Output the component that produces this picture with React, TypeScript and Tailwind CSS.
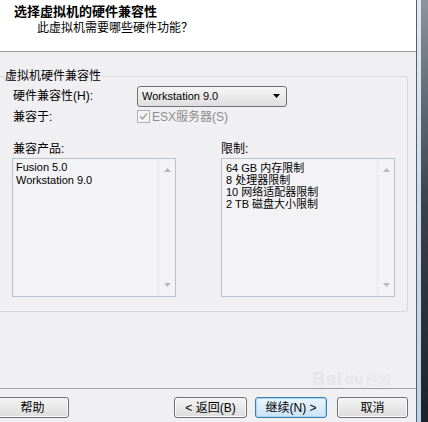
import React from "react";

const font = { fontFamily: '"Liberation Sans", "Noto Sans CJK SC", sans-serif' };

function ScrollBox({ children, width }: { children: React.ReactNode; width: string }) {
  return (
    <div className={`${width} h-[139px] border border-[#b9c1c9] bg-[#f3f2f5] flex`}>
      <div className="flex-1 pl-[3px] pt-[2px]">{children}</div>
      <div className="w-[17px] border-l border-[#e6e6e8] flex flex-col justify-between items-center py-[9px]">
        <svg width="7" height="4" viewBox="0 0 7 4">
          <path d="M0 4 L3.5 0 L7 4 Z" fill="#b8b8bc" />
        </svg>
        <svg width="7" height="4" viewBox="0 0 7 4">
          <path d="M0 0 L3.5 4 L7 0 Z" fill="#b8b8bc" />
        </svg>
      </div>
    </div>
  );
}

function Btn({ label, focus, className = "" }: { label: React.ReactNode; focus?: boolean; className?: string }) {
  return (
    <div
      className={`h-[21px] rounded-[3px] border flex items-center justify-center text-[12px] text-black ${
        focus
          ? "border-[#3c7fb1] bg-gradient-to-b from-[#eaf6fd] to-[#c9e3f6] shadow-[inset_0_0_0_1px_#a8d8f5]"
          : "border-[#707070] bg-gradient-to-b from-[#f4f4f4] to-[#dcdcdc] shadow-[inset_0_0_0_1px_#fbfbfb]"
      } ${className}`}
    >
      {label}
    </div>
  );
}

const limits = ["64 GB 内存限制", "8 处理器限制", "10 网络适配器限制", "2 TB 磁盘大小限制"];

export default function App() {
  return (
    <div className="w-[428px] h-[422px] flex overflow-hidden" style={font}>
      <div className="w-[416px] h-full flex flex-col bg-[#f0eff2] relative">
        <div className="h-[52px] bg-white border-b border-[#a0a0a0] pt-[4px] pl-[14px]">
          <div className="text-[13px] leading-[16px] font-bold text-black">选择虚拟机的硬件兼容性</div>
          <div className="text-[12px] leading-[16px] text-black pl-[23px]">此虚拟机需要哪些硬件功能？</div>
        </div>

        <div className="h-[336px]">
          <fieldset className="mt-[16px] w-[408px] border border-l-0 border-[#d9d9dc] rounded-r-[3px] pb-[14px]">
            <legend className="ml-[5px] pr-[2px] text-[12px] leading-[16px] text-black">虚拟机硬件兼容性</legend>
            <div className="pl-[13px]">
              <div className="mt-[2px] h-[20px] flex items-center">
                <div className="w-[124px] text-[12px] text-black">硬件兼容性(H):</div>
                <div className="w-[150px] h-[21px] rounded-[3px] border border-[#707070] bg-gradient-to-b from-[#f6f6f6] to-[#dedede] flex items-center justify-between pl-[4px] pr-[6px]">
                  <span className="text-[11px] text-black">Workstation 9.0</span>
                  <svg width="7" height="4" viewBox="0 0 7 4">
                    <path d="M0 0 L7 0 L3.5 4 Z" fill="#000" />
                  </svg>
                </div>
              </div>
              <div className="mt-[1px] h-[19px] flex items-center">
                <div className="w-[124px] text-[12px] text-black">兼容于:</div>
                <div className="flex items-center gap-[2px]">
                  <div className="w-[13px] h-[13px] border border-[#b0b0b0] bg-[#f4f4f4] flex items-center justify-center">
                    <svg width="9" height="9" viewBox="0 0 9 9">
                      <path d="M1 4.5 L3.5 7 L8 1.5" stroke="#a0a0a0" strokeWidth="1.4" fill="none" />
                    </svg>
                  </div>
                  <span className="text-[12px] text-[#8d8d8d]">ESX服务器(S)</span>
                </div>
              </div>
              <div className="mt-[15px] flex gap-[45px]">
                <div className="-ml-[1px] flex flex-col">
                  <div className="h-[16px] pl-[1px] text-[12px] leading-[16px] text-black">兼容产品:</div>
                  <div className="mt-[1px]">
                    <ScrollBox width="w-[164px]">
                      <div className="text-[11px] leading-[13px] text-black">Fusion 5.0</div>
                      <div className="text-[11px] leading-[13px] text-black">Workstation 9.0</div>
                    </ScrollBox>
                  </div>
                </div>
                <div className="flex flex-col">
                  <div className="h-[16px] text-[12px] leading-[16px] text-black">限制:</div>
                  <div className="mt-[1px]">
                    <ScrollBox width="w-[174px]">
                      <div className="pl-[1px] pt-[1px] text-black">
                        {limits.map((l) => (
                          <div key={l} className="h-[12px] text-[11px] leading-[12px] whitespace-nowrap">
                            {l}
                          </div>
                        ))}
                      </div>
                    </ScrollBox>
                  </div>
                </div>
              </div>
            </div>
          </fieldset>
        </div>

        <div className="border-t border-[#a0a0a0] flex-1 flex items-start pt-[8px] pr-[8px]">
          <Btn label="帮助" className="-ml-[4px] w-[73px]" />
          <div className="flex-1" />
          <Btn label="< 返回(B)" className="w-[73px]" />
          <Btn label="继续(N) >" focus className="ml-[8px] w-[72px]" />
          <Btn label="取消" className="ml-[10px] w-[71px]" />
        </div>

        <div className="absolute left-[312px] top-[370px] flex items-end gap-[2px] text-[#e6e6ea] pointer-events-none">
          <span className="text-[18px] font-bold leading-[18px] tracking-[1px]">Bai</span>
          <span className="text-[15px] font-bold leading-[18px]">du</span>
          <span className="text-[13px] leading-[16px]">经验</span>
        </div>
      </div>

      <div className="flex-1 h-full flex">
        <div className="w-[1px] bg-[#5a5d63]" />
        <div className="w-[4px] bg-gradient-to-b from-[#dfe9f3] via-[#c7dbef] to-[#b9d3ec]" />
        <div className="flex-1 bg-gradient-to-b from-[#8d939c] via-[#3a4048] to-[#1e2228]" />
      </div>
    </div>
  );
}
